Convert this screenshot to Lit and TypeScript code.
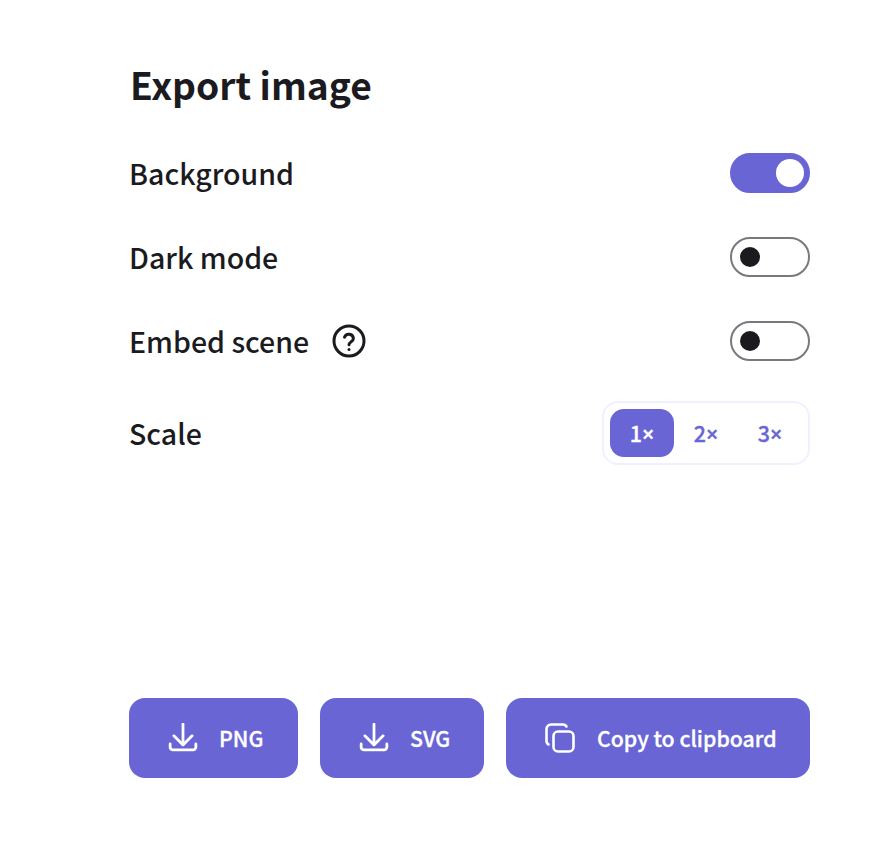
import { LitElement, html, css, svg, TemplateResult } from 'lit';
import { customElement } from 'lit/decorators.js';

const downloadIcon = svg`<path d="M2 19.500v3a2.500 2.500 0 0 0 2.500 2.500h19a2.500 2.500 0 0 0 2.500-2.500v-3"/><path d="M14 1v19.500M5.500 12 14 20.500l8.500-8.500"/>`;

@customElement('app-root')
export class AppRoot extends LitElement {
  private toggle(on: boolean): TemplateResult {
    return html`<span class="toggle ${on ? 'on' : ''}"><span class="knob"></span></span>`;
  }

  private download(): TemplateResult {
    return html`<svg class="icon" viewBox="0 0 28 28" fill="none" stroke="currentColor" stroke-width="2.6" stroke-linecap="round" stroke-linejoin="round">${downloadIcon}</svg>`;
  }

  render(): TemplateResult {
    return html`
      <div class="panel">
        <h1>Export image</h1>
        <div class="row"><span class="label">Background</span>${this.toggle(true)}</div>
        <div class="row"><span class="label">Dark mode</span>${this.toggle(false)}</div>
        <div class="row">
          <span class="label">Embed scene
            <svg class="help" viewBox="0 0 34 34" fill="none" stroke="#1b1b1f" stroke-width="3" stroke-linecap="round" stroke-linejoin="round">
              <circle cx="17" cy="17" r="15"/>
              <path d="M12.500 13.200a4.600 4.600 0 0 1 8.900 1.300c0 3-4.400 3.600-4.400 6.200"/>
              <path d="M17 25.400v.1"/>
            </svg>
          </span>
          ${this.toggle(false)}
        </div>
        <div class="row scale-row">
          <span class="label">Scale</span>
          <div class="scale">
            <span class="opt active">1<span class="times">×</span></span>
            <span class="opt">2<span class="times">×</span></span>
            <span class="opt">3<span class="times">×</span></span>
          </div>
        </div>
        <div class="actions">
          <button class="png">${this.download()}PNG</button>
          <button class="svg">${this.download()}SVG</button>
          <button class="copy">
            <svg class="icon" viewBox="0 0 30 30" fill="none" stroke="currentColor" stroke-width="2.600" stroke-linecap="round" stroke-linejoin="round">
              <rect x="8.500" y="8.500" width="20" height="20" rx="4.500"/>
              <path d="M21.500 3.500A4 4 0 0 0 18.500 1.500H6A4.500 4.500 0 0 0 1.500 6v12.500a4 4 0 0 0 2 3"/>
            </svg>
            Copy to clipboard
          </button>
        </div>
      </div>
    `;
  }

  static styles = css`
    :host {
      display: block;
      height: 850px;
      background: #fff;
      color: #1b1b1f;
      font-family: 'Noto Sans CJK SC', 'Noto Sans', sans-serif;
    }
    .panel {
      display: flex;
      flex-direction: column;
      height: 850px;
      box-sizing: border-box;
      padding: 62px 74px 72px 130px;
    }
    h1 {
      margin: 0 0 47px;
      font-size: 37.200px;
      line-height: 44px;
      font-weight: 700;
    }
    .row {
      display: flex;
      align-items: center;
      justify-content: space-between;
      height: 40px;
      margin-bottom: 44px;
    }
    .label {
      display: flex;
      align-items: center;
      margin-left: -1px;
      font-size: 28.500px;
      line-height: 40px;
      font-weight: 500;
    }
    .help {
      width: 34px;
      height: 34px;
      margin-left: 23px;
    }
    .toggle {
      display: flex;
      align-items: center;
      box-sizing: border-box;
      width: 80px;
      height: 40px;
      padding: 0 8px;
      border: 2px solid #79787f;
      border-radius: 20px;
      background: #fff;
    }
    .toggle.on {
      justify-content: flex-end;
      padding: 0 4px;
      border-color: #6965d4;
      background: #6965d4;
    }
    .knob {
      width: 20px;
      height: 20px;
      border-radius: 50%;
      background: #1b1b1f;
    }
    .on .knob {
      width: 28px;
      height: 28px;
      background: #fff;
    }
    .scale-row {
      height: 64px;
      margin-top: -4px;
      margin-bottom: 0;
    }
    .scale {
      display: flex;
      box-sizing: border-box;
      height: 64px;
      padding: 6px;
      border: 2px solid #f1f0ff;
      border-radius: 16px;
    }
    .opt {
      width: 64px;
      height: 48px;
      line-height: 48px;
      border-radius: 14px;
      text-align: center;
      color: #6965d4;
      font-size: 21.500px;
      font-weight: 500;
      -webkit-text-stroke: 0.3px currentColor;
    }
    .times {
      font-family: 'Noto Sans', sans-serif;
      font-weight: 600;
    }
    .opt.active {
      background: #6965d4;
      color: #fff;
    }
    .actions {
      display: flex;
      gap: 22px;
      margin-top: auto;
      margin-left: -1px;
    }
    button {
      display: flex;
      align-items: center;
      gap: 21px;
      height: 80px;
      padding: 0 0 1px 39px;
      border: 0;
      border-radius: 16px;
      background: #6965d4;
      color: #fff;
      font-family: inherit;
      font-size: 21.300px;
      font-weight: 500;
      -webkit-text-stroke: 0.3px currentColor;
    }
    .png { width: 169px; }
    .svg { width: 164px; }
    .copy { flex: 1; gap: 22px; }
    .icon {
      flex: none;
      width: 30px;
      height: 30px;
    }
  `;
}
